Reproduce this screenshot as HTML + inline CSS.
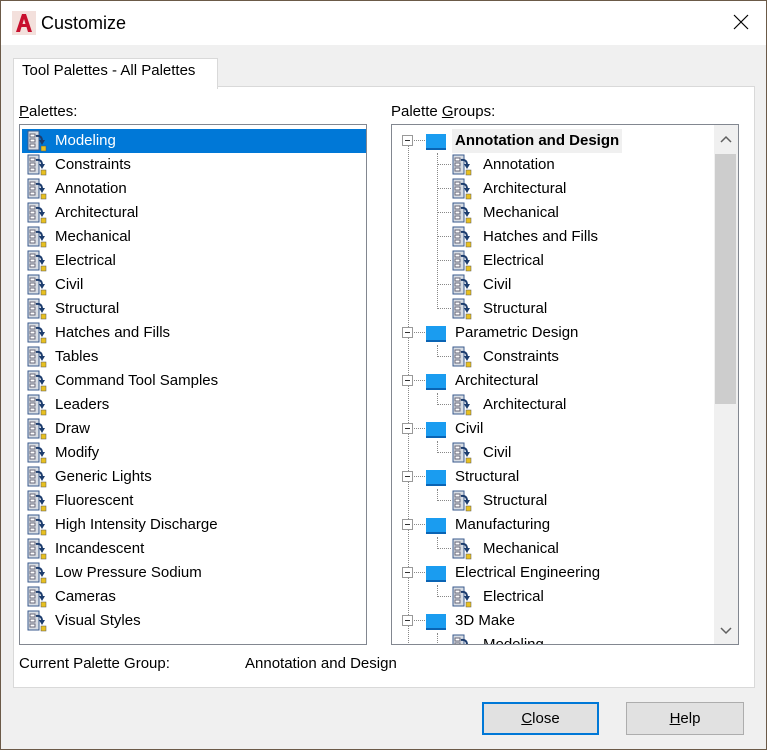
<!DOCTYPE html><html><head><style>
body{margin:0;width:767px;height:750px;overflow:hidden;background:#f0f0f0;font-family:"Liberation Sans",sans-serif;font-size:15px;color:#000;position:relative}
.a{position:absolute}
.win{left:0;top:0;width:765px;height:748px;border:1px solid #6b5a48;}
.it{position:absolute;left:0;height:24px;line-height:24px;white-space:nowrap}
.it svg{position:absolute;left:5px;top:1px}
.it span{position:absolute;left:33px}
.sel{background:#0078d7;color:#fff;width:344px}
.g{position:absolute;height:24px;line-height:24px;white-space:nowrap}
.ex{position:absolute;left:10px;top:6px;width:9px;height:9px;border:1px solid #999;background:#fff}
.ex:after{content:"";position:absolute;left:2px;top:4px;width:5px;height:1px;background:#333}
.fo{position:absolute;left:34px;top:5px;width:20px;height:14px;background:#1a9cf0;border-bottom:2px solid #0a64b4}
.hd{position:absolute;left:20px;top:11px;width:13px;border-top:1px dotted #888}
.ch{position:absolute;left:45px;top:11px;width:14px;border-top:1px dotted #888}
</style></head><body>
<div class="a win"></div>
<div class="a" style="left:1px;top:1px;width:765px;height:44px;background:#fff"></div>
<svg class="a" style="left:12px;top:11px" width="24" height="24"><rect width="24" height="24" fill="#f3e0dc"/><path d="M4 21 L10 3 H14 L20 21 H16 L14.5 16 H9.5 L8 21 Z M10.5 13 H13.5 L12 8 Z" fill="#c8102e"/></svg>
<div class="a" style="left:41px;top:13px;font-size:18px">Customize</div>
<svg class="a" style="left:733px;top:14px" width="16" height="16"><path d="M1 1L15 15M15 1L1 15" stroke="#000" stroke-width="1.2"/></svg>
<div class="a" style="left:13px;top:86px;width:740px;height:600px;background:#fff;border:1px solid #d9d9d9"></div>
<div class="a" style="left:13px;top:58px;width:203px;height:30px;background:#fff;border:1px solid #d9d9d9;border-bottom:none"></div>
<div class="a" style="left:22px;top:62px">Tool Palettes - All Palettes</div>
<div class="a" style="left:19px;top:103px"><u>P</u>alettes:</div>
<div class="a" style="left:391px;top:103px">Palette <u>G</u>roups:</div>
<div class="a" style="left:19px;top:124px;width:346px;height:519px;border:1px solid #828790;background:#fff;overflow:hidden">
<div style="position:absolute;left:2px;top:4px">
<svg width="0" height="0" style="position:absolute"><defs><g id="ic"><rect x="1" y="1" width="11" height="19" fill="#d8dde4" stroke="#3a5a8c"/><rect x="3" y="4" width="5" height="3" fill="#fff" stroke="#667"/><rect x="3" y="9" width="5" height="3" fill="#fff" stroke="#667"/><rect x="3" y="14" width="5" height="3" fill="#fff" stroke="#667"/><path d="M9 6 Q15 5 15 11" stroke="#1d3d6e" stroke-width="2" fill="none"/><path d="M12 10 L15 15 L18 10Z" fill="#1d3d6e"/><rect x="14" y="16" width="5" height="5" fill="#e8c020" stroke="#555" stroke-width=".5"/></g></defs></svg>
<div class="it sel" style="top:0"><svg width="20" height="22"><use href="#ic"/></svg><span>Modeling</span></div>
<div class="it" style="top:24px"><svg width="20" height="22"><use href="#ic"/></svg><span>Constraints</span></div>
<div class="it" style="top:48px"><svg width="20" height="22"><use href="#ic"/></svg><span>Annotation</span></div>
<div class="it" style="top:72px"><svg width="20" height="22"><use href="#ic"/></svg><span>Architectural</span></div>
<div class="it" style="top:96px"><svg width="20" height="22"><use href="#ic"/></svg><span>Mechanical</span></div>
<div class="it" style="top:120px"><svg width="20" height="22"><use href="#ic"/></svg><span>Electrical</span></div>
<div class="it" style="top:144px"><svg width="20" height="22"><use href="#ic"/></svg><span>Civil</span></div>
<div class="it" style="top:168px"><svg width="20" height="22"><use href="#ic"/></svg><span>Structural</span></div>
<div class="it" style="top:192px"><svg width="20" height="22"><use href="#ic"/></svg><span>Hatches and Fills</span></div>
<div class="it" style="top:216px"><svg width="20" height="22"><use href="#ic"/></svg><span>Tables</span></div>
<div class="it" style="top:240px"><svg width="20" height="22"><use href="#ic"/></svg><span>Command Tool Samples</span></div>
<div class="it" style="top:264px"><svg width="20" height="22"><use href="#ic"/></svg><span>Leaders</span></div>
<div class="it" style="top:288px"><svg width="20" height="22"><use href="#ic"/></svg><span>Draw</span></div>
<div class="it" style="top:312px"><svg width="20" height="22"><use href="#ic"/></svg><span>Modify</span></div>
<div class="it" style="top:336px"><svg width="20" height="22"><use href="#ic"/></svg><span>Generic Lights</span></div>
<div class="it" style="top:360px"><svg width="20" height="22"><use href="#ic"/></svg><span>Fluorescent</span></div>
<div class="it" style="top:384px"><svg width="20" height="22"><use href="#ic"/></svg><span>High Intensity Discharge</span></div>
<div class="it" style="top:408px"><svg width="20" height="22"><use href="#ic"/></svg><span>Incandescent</span></div>
<div class="it" style="top:432px"><svg width="20" height="22"><use href="#ic"/></svg><span>Low Pressure Sodium</span></div>
<div class="it" style="top:456px"><svg width="20" height="22"><use href="#ic"/></svg><span>Cameras</span></div>
<div class="it" style="top:480px"><svg width="20" height="22"><use href="#ic"/></svg><span>Visual Styles</span></div>
</div></div>
<div class="a" style="left:391px;top:124px;width:346px;height:519px;border:1px solid #828790;background:#fff;overflow:hidden">
<div class="a" style="left:322px;top:0;width:24px;height:519px;background:#f0f0f0"></div>
<div class="a" style="left:323px;top:29px;width:21px;height:250px;background:#cdcdcd"></div>
<svg class="a" style="left:328px;top:10px" width="12" height="8"><path d="M1 7L6 2L11 7" stroke="#606060" stroke-width="1.5" fill="none"/></svg>
<svg class="a" style="left:328px;top:502px" width="12" height="8"><path d="M1 1L6 6L11 1" stroke="#606060" stroke-width="1.5" fill="none"/></svg>
<div class="a" style="left:16px;top:20px;height:500px;border-left:1px dotted #888"></div>
<div class="a" style="left:45px;top:28px;height:156px;border-left:1px dotted #888"></div>
<div class="a" style="left:45px;top:220px;height:12px;border-left:1px dotted #888"></div>
<div class="a" style="left:45px;top:268px;height:12px;border-left:1px dotted #888"></div>
<div class="a" style="left:45px;top:316px;height:12px;border-left:1px dotted #888"></div>
<div class="a" style="left:45px;top:364px;height:12px;border-left:1px dotted #888"></div>
<div class="a" style="left:45px;top:412px;height:12px;border-left:1px dotted #888"></div>
<div class="a" style="left:45px;top:460px;height:12px;border-left:1px dotted #888"></div>
<div class="a" style="left:45px;top:508px;height:12px;border-left:1px dotted #888"></div>
<div style="position:absolute;left:0;top:4px;width:322px">
<div class="g" style="top:0;width:322px"><div class="hd"></div><div class="ex"></div><div class="fo"></div><span style="position:absolute;left:60px;top:0;background:#f0f0f0;padding:0 3px;font-weight:bold">Annotation and Design</span></div>
<div class="g" style="top:24px"><div class="ch"></div><svg style="position:absolute;left:60px;top:1px" width="20" height="22"><use href="#ic"/></svg><span style="position:absolute;left:91px">Annotation</span></div>
<div class="g" style="top:48px"><div class="ch"></div><svg style="position:absolute;left:60px;top:1px" width="20" height="22"><use href="#ic"/></svg><span style="position:absolute;left:91px">Architectural</span></div>
<div class="g" style="top:72px"><div class="ch"></div><svg style="position:absolute;left:60px;top:1px" width="20" height="22"><use href="#ic"/></svg><span style="position:absolute;left:91px">Mechanical</span></div>
<div class="g" style="top:96px"><div class="ch"></div><svg style="position:absolute;left:60px;top:1px" width="20" height="22"><use href="#ic"/></svg><span style="position:absolute;left:91px">Hatches and Fills</span></div>
<div class="g" style="top:120px"><div class="ch"></div><svg style="position:absolute;left:60px;top:1px" width="20" height="22"><use href="#ic"/></svg><span style="position:absolute;left:91px">Electrical</span></div>
<div class="g" style="top:144px"><div class="ch"></div><svg style="position:absolute;left:60px;top:1px" width="20" height="22"><use href="#ic"/></svg><span style="position:absolute;left:91px">Civil</span></div>
<div class="g" style="top:168px"><div class="ch"></div><svg style="position:absolute;left:60px;top:1px" width="20" height="22"><use href="#ic"/></svg><span style="position:absolute;left:91px">Structural</span></div>
<div class="g" style="top:192px"><div class="hd"></div><div class="ex"></div><div class="fo"></div><span style="position:absolute;left:63px">Parametric Design</span></div>
<div class="g" style="top:216px"><div class="ch"></div><svg style="position:absolute;left:60px;top:1px" width="20" height="22"><use href="#ic"/></svg><span style="position:absolute;left:91px">Constraints</span></div>
<div class="g" style="top:240px"><div class="hd"></div><div class="ex"></div><div class="fo"></div><span style="position:absolute;left:63px">Architectural</span></div>
<div class="g" style="top:264px"><div class="ch"></div><svg style="position:absolute;left:60px;top:1px" width="20" height="22"><use href="#ic"/></svg><span style="position:absolute;left:91px">Architectural</span></div>
<div class="g" style="top:288px"><div class="hd"></div><div class="ex"></div><div class="fo"></div><span style="position:absolute;left:63px">Civil</span></div>
<div class="g" style="top:312px"><div class="ch"></div><svg style="position:absolute;left:60px;top:1px" width="20" height="22"><use href="#ic"/></svg><span style="position:absolute;left:91px">Civil</span></div>
<div class="g" style="top:336px"><div class="hd"></div><div class="ex"></div><div class="fo"></div><span style="position:absolute;left:63px">Structural</span></div>
<div class="g" style="top:360px"><div class="ch"></div><svg style="position:absolute;left:60px;top:1px" width="20" height="22"><use href="#ic"/></svg><span style="position:absolute;left:91px">Structural</span></div>
<div class="g" style="top:384px"><div class="hd"></div><div class="ex"></div><div class="fo"></div><span style="position:absolute;left:63px">Manufacturing</span></div>
<div class="g" style="top:408px"><div class="ch"></div><svg style="position:absolute;left:60px;top:1px" width="20" height="22"><use href="#ic"/></svg><span style="position:absolute;left:91px">Mechanical</span></div>
<div class="g" style="top:432px"><div class="hd"></div><div class="ex"></div><div class="fo"></div><span style="position:absolute;left:63px">Electrical Engineering</span></div>
<div class="g" style="top:456px"><div class="ch"></div><svg style="position:absolute;left:60px;top:1px" width="20" height="22"><use href="#ic"/></svg><span style="position:absolute;left:91px">Electrical</span></div>
<div class="g" style="top:480px"><div class="hd"></div><div class="ex"></div><div class="fo"></div><span style="position:absolute;left:63px">3D Make</span></div>
<div class="g" style="top:504px"><div class="ch"></div><svg style="position:absolute;left:60px;top:1px" width="20" height="22"><use href="#ic"/></svg><span style="position:absolute;left:91px">Modeling</span></div>
</div></div>
<div class="a" style="left:19px;top:655px">Current Palette Group:</div>
<div class="a" style="left:245px;top:655px">Annotation and Design</div>
<div class="a" style="left:482px;top:702px;width:117px;height:33px;border:2px solid #0078d7;background:#e1e1e1;box-sizing:border-box;text-align:center;line-height:29px"><u>C</u>lose</div>
<div class="a" style="left:626px;top:702px;width:118px;height:33px;border:1px solid #adadad;background:#e1e1e1;box-sizing:border-box;text-align:center;line-height:31px"><u>H</u>elp</div>
</body></html>
